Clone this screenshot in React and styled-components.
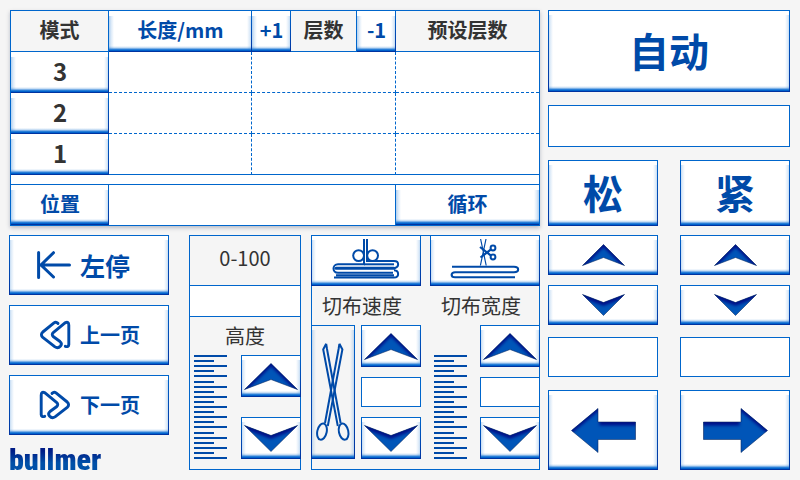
import React, { useId } from "react";
import styled, { createGlobalStyle, css } from "styled-components";

const LINE = "#0066cc";
const NAVY = "#0033a0";
const INK = "#004aa8";
const DARK = "#333333";
const PANEL = "#f5f5f5";

const GlobalStyle = createGlobalStyle`
  *, *::before, *::after { box-sizing: border-box; }
  body {
    margin: 0;
    background: ${PANEL};
    color: ${DARK};
    font-family: "Noto Sans CJK SC", "Noto Sans", sans-serif;
    font-size: 20px;
    line-height: 24px;
  }
  svg { display: block; flex: none; }
`;

const Page = styled.main`
  display: grid;
  grid-template-columns: minmax(0, 531fr) minmax(0, 242fr);
  column-gap: 8px;
  padding: 10px 10px 10px 9px;
`;

const MainColumn = styled.div`
  display: flex;
  flex-direction: column;
  gap: 9px;
`;

/* Raised key: thin outline, soft glow on the sides, thick lip at the bottom. */
const Key = styled.button`
  display: flex;
  align-items: center;
  justify-content: center;
  width: 100%;
  height: ${(p) => (p.$height ? `${p.$height}px` : "100%")};
  margin: 0;
  padding: 0 0 3px;
  border: 0;
  border-radius: 0;
  color: ${(p) => (p.$dark ? DARK : INK)};
  font-family: inherit;
  font-size: ${(p) => p.$size || 20}px;
  font-weight: 700;
  line-height: 24px;
  white-space: nowrap;
  cursor: pointer;
  background-color: ${(p) => (p.$muted ? PANEL : "#ffffff")};
  background-repeat: no-repeat;
  background-image:
    linear-gradient(${(p) => (p.$inset ? "transparent, transparent" : `${LINE}, ${LINE}`)}),
    linear-gradient(${NAVY}, ${NAVY}),
    linear-gradient(${(p) => (p.$inset ? "transparent, transparent" : `${LINE}, ${NAVY}`)}),
    linear-gradient(${(p) => (p.$openRight ? "transparent, transparent" : `${LINE}, ${NAVY}`)}),
    linear-gradient(rgba(0, 102, 204, 0), rgba(0, 102, 204, 0.25) 30%, #2f83da 55%, #0062cc 75%, #0058c4),
    linear-gradient(90deg, rgba(0, 102, 204, 0.3), rgba(0, 102, 204, 0.12) 50%, rgba(0, 102, 204, 0)),
    linear-gradient(270deg, rgba(0, 102, 204, 0.3), rgba(0, 102, 204, 0.12) 50%, rgba(0, 102, 204, 0));
  background-size:
    100% 1px, 100% 1px, 1px 100%, 1px 100%, 100% 6px,
    5px calc(100% - 5px), 5px calc(100% - 5px);
  background-position:
    left top, left bottom, left top, right top, left bottom,
    left bottom, right bottom;
  &:active { filter: brightness(0.94); }
  &:focus-visible { outline: 2px solid ${LINE}; outline-offset: 1px; }
`;

const IconKey = styled(Key)`
  padding-bottom: 0;
`;

const Field = styled.input.attrs({ type: "text" })`
  display: block;
  width: 100%;
  min-width: 0;
  height: ${(p) => p.$height}px;
  margin: 0;
  padding: 0 8px;
  border: 1px solid ${LINE};
  border-radius: 0;
  background: #ffffff;
  color: ${DARK};
  font: inherit;
  text-align: center;
  ${(p) => p.$bare && css`border-width: 0 1px 0 0;`}
`;

/* ---- layer table ---- */

const LayerPanel = styled.section`
  margin-left: 1px;
  border: 1px solid ${LINE};
  background: #ffffff;
  box-shadow: 0 2px 4px rgba(0, 20, 60, 0.25);
`;

const LayerTable = styled.table`
  display: block;
  thead, tbody { display: block; }
`;

const HeadRow = styled.tr`
  display: grid;
  height: 41px;
  grid-template-columns:
    minmax(0, 98fr) minmax(0, 143fr) minmax(0, 39fr)
    minmax(0, 66fr) minmax(0, 39fr) minmax(0, 143fr);
`;

const BodyRow = styled.tr`
  display: grid;
  height: 41px;
  grid-template-columns: minmax(0, 98fr) minmax(0, 143fr) minmax(0, 144fr) minmax(0, 143fr);
`;

const KeyCell = styled.th`
  display: grid;
  padding: 0;
`;

const HeadCell = styled.th`
  display: flex;
  align-items: center;
  justify-content: center;
  padding: 0 0 2px;
  border-right: ${(p) => (p.$last ? 0 : 1)}px solid ${LINE};
  border-bottom: 1px solid ${LINE};
  background: ${PANEL};
  font-weight: 700;
  white-space: nowrap;
`;

const DataCell = styled.td`
  padding: 0;
  border-bottom: 1px dashed ${LINE};
  border-right: ${(p) => (p.$last ? 0 : 1)}px dashed ${LINE};
  ${BodyRow}:last-child & { border-bottom-style: solid; }
`;

const PositionRow = styled.div`
  display: grid;
  grid-template-columns: minmax(0, 98fr) minmax(0, 287fr) minmax(0, 143fr);
  height: 41px;
  margin-top: 9px;
  border-top: 1px solid ${LINE};
`;

/* ---- lower left ---- */

const LowerRow = styled.div`
  display: grid;
  grid-template-columns: minmax(0, 170fr) minmax(0, 112fr) minmax(0, 229fr);
  column-gap: 10px;
`;

const Nav = styled.nav`
  display: flex;
  flex-direction: column;
  gap: 10px;
  padding-right: 10px;
`;

const NavKey = styled(Key)`
  justify-content: flex-start;
  gap: 9px;
  padding-left: 27px;
  padding-bottom: 1px;
`;

const Brand = styled.div`
  margin-bottom: -5px;
  font-family: "Roboto Condensed", "Open Sans Condensed", "Liberation Sans Narrow", Roboto, sans-serif;
  font-size: 30px;
  font-weight: 900;
  line-height: 30px;
  color: transparent;
  background: linear-gradient(#001c86 20%, #0050a8 60%);
  background-clip: text;
  -webkit-background-clip: text;
`;

const Panel = styled.section`
  box-shadow: inset 0 0 0 1px ${LINE};
  padding-bottom: 11px;
`;

const RangeLabel = styled.div`
  display: flex;
  align-items: center;
  justify-content: center;
  height: 51px;
  padding-bottom: 6px;
`;

const RangeField = styled(Field)`
  margin-top: -1px;
`;

const Caption = styled.label`
  display: flex;
  align-items: center;
  height: ${(p) => p.$height}px;
  ${(p) => (p.$centred ? css`justify-content: center;` : css`padding-left: 11px;`)}
  white-space: nowrap;
`;

const Adjust = styled.div`
  display: flex;
  justify-content: space-between;
  align-items: flex-end;
  padding-left: ${(p) => p.$inset || 0}px;
`;

const AdjustStack = styled.div`
  display: flex;
  flex-direction: column;
  gap: ${(p) => p.$gap}px;
  width: 60px;
`;

const CutPanel = styled(Panel)`
  display: grid;
  grid-template-columns: repeat(2, minmax(0, 110fr));
  column-gap: 9px;
`;

const CutterSlot = styled.div`
  width: 44px;
  height: 134px;
`;

/* ---- right column ---- */

const SideColumn = styled.div`
  display: flex;
  flex-direction: column;
  gap: ${(p) => p.$gap || 0}px;
`;

const Pair = styled.div`
  display: grid;
  grid-template-columns: repeat(2, minmax(0, 1fr));
  column-gap: 22px;
  row-gap: 10px;
  margin-top: ${(p) => p.$top || 0}px;
`;

/* ---- drawings ---- */

function ShadedShape({ width, height, points }) {
  const id = useId();
  return (
    <svg width={width} height={height} viewBox={`0 0 ${width} ${height}`} aria-hidden="true">
      <defs>
        <clipPath id={`${id}c`}><polygon points={points} /></clipPath>
        <filter id={`${id}b`} x="-50%" y="-50%" width="200%" height="200%">
          <feGaussianBlur stdDeviation="1.7" />
        </filter>
        <mask id={`${id}m`} maskUnits="userSpaceOnUse" x="-20" y="-20" width={width + 40} height={height + 40}>
          <rect x="-20" y="-20" width={width + 40} height={height + 40} fill="#fff" />
          <polygon points={points} fill="#000" stroke="#000" strokeWidth="3" transform="translate(0 5)" filter={`url(#${id}b)`} />
        </mask>
      </defs>
      <polygon points={points} fill="#0055b8" />
      <g clipPath={`url(#${id}c)`}>
        <rect width={width} height={height} fill="#001088" mask={`url(#${id}m)`} />
      </g>
      <polygon points={points} fill="none" stroke="#0a2a60" strokeWidth="0.7" strokeOpacity="0.8" />
    </svg>
  );
}

const BigUp = () => <ShadedShape width={54} height={27} points="27,0.5 53.5,26.5 27,16.5 0.5,26.5" />;
const BigDown = () => <ShadedShape width={54} height={27} points="0.5,0.5 27,10.5 53.5,0.5 27,26.5" />;
const SmallUp = () => <ShadedShape width={43} height={22} points="21.5,0.5 42.5,21.5 21.5,13.5 0.5,21.5" />;
const SmallDown = () => <ShadedShape width={43} height={22} points="0.5,0.5 21.5,8.5 42.5,0.5 21.5,21.5" />;
const ArrowLeft = () => (
  <ShadedShape width={65} height={45} points="0.5,22.5 27,0.5 27,14 64.5,14 64.5,31.5 27,31.5 27,44.5" />
);
const ArrowRight = () => (
  <ShadedShape width={65} height={45} points="64.5,22.5 38,0.5 38,14 0.5,14 0.5,31.5 38,31.5 38,44.5" />
);

const StopIcon = () => (
  <svg width="35" height="30" viewBox="0 0 35 30" fill="none" stroke={INK} strokeWidth="3" strokeLinecap="round" aria-hidden="true">
    <path d="M2.6 2.5V27.5M5 15H33.5M17.5 2.7L5 15L17.5 27" />
  </svg>
);

const PageIcon = ({ forward }) => (
  <svg width="35" height="32" viewBox="0 0 35 32" fill="none" stroke={INK} strokeWidth="2.9" strokeLinecap="round" strokeLinejoin="round" aria-hidden="true">
    <path
      transform={forward ? "translate(38 0) scale(-1 1)" : undefined}
      d="M22 4.4Q20 2.4 18 3.9L6.8 13Q4 15.7 6.8 18.4L19 27.9Q22 29.8 24.6 27Q26.4 24.5 24 22.5L17.5 17.8Q15 15.6 17.5 13.4L29 3.9Q32.8 1.9 32.8 6.2V25.5Q32.5 28.4 29.3 27.3"
    />
  </svg>
);

const SpreadIcon = () => (
  <svg width="74" height="49" viewBox="0 0 74 49" fill="none" stroke={INK} strokeWidth="2" aria-hidden="true">
    <circle cx="29.6" cy="19.6" r="5.4" />
    <circle cx="43.6" cy="19.6" r="5.4" />
    <path d="M38 3V25H65C70.5 25 70.5 31.5 65 32.2" />
    <path d="M35 3V28.3H9C3 28.3 3 36.8 9 36.8H64" />
    <path d="M35 28.3H65" />
    <path d="M7 32.3H65" strokeWidth="3" strokeLinecap="round" />
    <path d="M65 34.3C70.5 34.6 70.5 41.4 65 41.6H5M7 39.2H65" />
  </svg>
);

const TrimIcon = () => (
  <svg width="78" height="49" viewBox="0 0 78 49" fill="none" stroke={INK} aria-hidden="true">
    <path d="M34.6 3L40.2 29.5M40 3L34.4 29.5" strokeWidth="1.2" />
    <path d="M34 11L45 19.6M34.5 21.5L45 13.4" strokeWidth="2.2" />
    <circle cx="47" cy="12" r="2.4" strokeWidth="2" />
    <circle cx="47" cy="21" r="2.4" strokeWidth="2" />
    <path d="M6 30.8H68C73.5 30.8 73.5 36.2 68 36.2H9C4.5 36.2 4.5 41.3 9 41.3H69" strokeWidth="2.1" />
  </svg>
);

const ShearsIcon = () => (
  <svg width="34" height="100" viewBox="0 0 34 100" fill="none" stroke={INK} strokeWidth="2" aria-hidden="true">
    <path d="M10.2 1.8L7.2 7.5L21.8 84M10.2 1.8L11 7L24.6 81" />
    <path d="M23.4 1.8L26.4 7.5L11.8 84M23.4 1.8L22.6 7L9 81" />
    <ellipse cx="27.6" cy="89.6" rx="4.7" ry="8.2" transform="rotate(-12 27.6 89.6)" />
    <ellipse cx="6" cy="89.6" rx="4.7" ry="8.2" transform="rotate(12 6 89.6)" />
  </svg>
);

const Ruler = () => (
  <svg width="33" height="104" viewBox="0 0 33 104" fill={INK} aria-hidden="true">
    {Array.from({ length: 21 }, (_, i) => (
      <rect key={i} x="0" y={Math.round(i * 5.1)} width={i % 2 ? 20 : 33} height="2" />
    ))}
  </svg>
);

/* ---- page ---- */

export default function App() {
  return (
    <>
      <GlobalStyle />
      <Page>
        <MainColumn>
          <LayerPanel>
            <LayerTable>
              <thead>
                <HeadRow>
                  <HeadCell scope="col">模式</HeadCell>
                  <KeyCell scope="col"><Key $inset>长度/mm</Key></KeyCell>
                  <KeyCell><Key $inset>+1</Key></KeyCell>
                  <HeadCell scope="col">层数</HeadCell>
                  <KeyCell><Key $inset>-1</Key></KeyCell>
                  <HeadCell scope="col" $last>预设层数</HeadCell>
                </HeadRow>
              </thead>
              <tbody>
                {["3", "2", "1"].map((mode) => (
                  <BodyRow key={mode}>
                    <KeyCell scope="row"><Key $inset $dark $size={24}>{mode}</Key></KeyCell>
                    <DataCell />
                    <DataCell />
                    <DataCell $last />
                  </BodyRow>
                ))}
              </tbody>
            </LayerTable>
            <PositionRow>
              <Key $inset>位置</Key>
              <Field $bare $height={40} aria-label="位置" />
              <Key $inset $openRight>循环</Key>
            </PositionRow>
          </LayerPanel>

          <LowerRow>
            <Nav>
              <NavKey $height={60} $size={25}><StopIcon />左停</NavKey>
              <NavKey $height={60}><PageIcon />上一页</NavKey>
              <NavKey $height={60}><PageIcon forward />下一页</NavKey>
              <Brand>bullmer</Brand>
            </Nav>

            <Panel>
              <RangeLabel>0-100</RangeLabel>
              <RangeField id="height" $height={32} />
              <Caption htmlFor="height" $height={38} $centred>高度</Caption>
              <Adjust $inset={5}>
                <Ruler />
                <AdjustStack $gap={20}>
                  <IconKey $height={42} aria-label="高度 +"><BigUp /></IconKey>
                  <IconKey $height={42} aria-label="高度 -"><BigDown /></IconKey>
                </AdjustStack>
              </Adjust>
            </Panel>

            <CutPanel>
              <div>
                <IconKey $height={51} aria-label="铺布"><SpreadIcon /></IconKey>
                <Caption htmlFor="speed" $height={39}>切布速度</Caption>
                <Adjust>
                  <CutterSlot>
                    <IconKey $muted aria-label="切布"><ShearsIcon /></IconKey>
                  </CutterSlot>
                  <AdjustStack $gap={10}>
                    <IconKey $height={42} aria-label="速度 +"><BigUp /></IconKey>
                    <Field id="speed" $height={30} />
                    <IconKey $height={42} aria-label="速度 -"><BigDown /></IconKey>
                  </AdjustStack>
                </Adjust>
              </div>
              <div>
                <IconKey $height={51} aria-label="裁边"><TrimIcon /></IconKey>
                <Caption htmlFor="width" $height={39}>切布宽度</Caption>
                <Adjust $inset={4}>
                  <Ruler />
                  <AdjustStack $gap={10}>
                    <IconKey $height={42} aria-label="宽度 +"><BigUp /></IconKey>
                    <Field id="width" $height={30} />
                    <IconKey $height={42} aria-label="宽度 -"><BigDown /></IconKey>
                  </AdjustStack>
                </Adjust>
              </div>
            </CutPanel>
          </LowerRow>
        </MainColumn>

        <SideColumn>
          <SideColumn $gap={13}>
            <Key $height={82} $size={40}>自动</Key>
            <Field $height={42} aria-label="自动" />
            <Pair>
              <Key $height={66} $size={40}>松</Key>
              <Key $height={66} $size={40}>紧</Key>
            </Pair>
          </SideColumn>
          <Pair $top={9}>
            <IconKey $height={40} aria-label="松 +"><SmallUp /></IconKey>
            <IconKey $height={40} aria-label="紧 +"><SmallUp /></IconKey>
            <IconKey $height={40} aria-label="松 -"><SmallDown /></IconKey>
            <IconKey $height={40} aria-label="紧 -"><SmallDown /></IconKey>
          </Pair>
          <Pair $top={12}>
            <Field $height={40} aria-label="松" />
            <Field $height={40} aria-label="紧" />
          </Pair>
          <Pair $top={13}>
            <IconKey $height={80} aria-label="向左"><ArrowLeft /></IconKey>
            <IconKey $height={80} aria-label="向右"><ArrowRight /></IconKey>
          </Pair>
        </SideColumn>
      </Page>
    </>
  );
}
